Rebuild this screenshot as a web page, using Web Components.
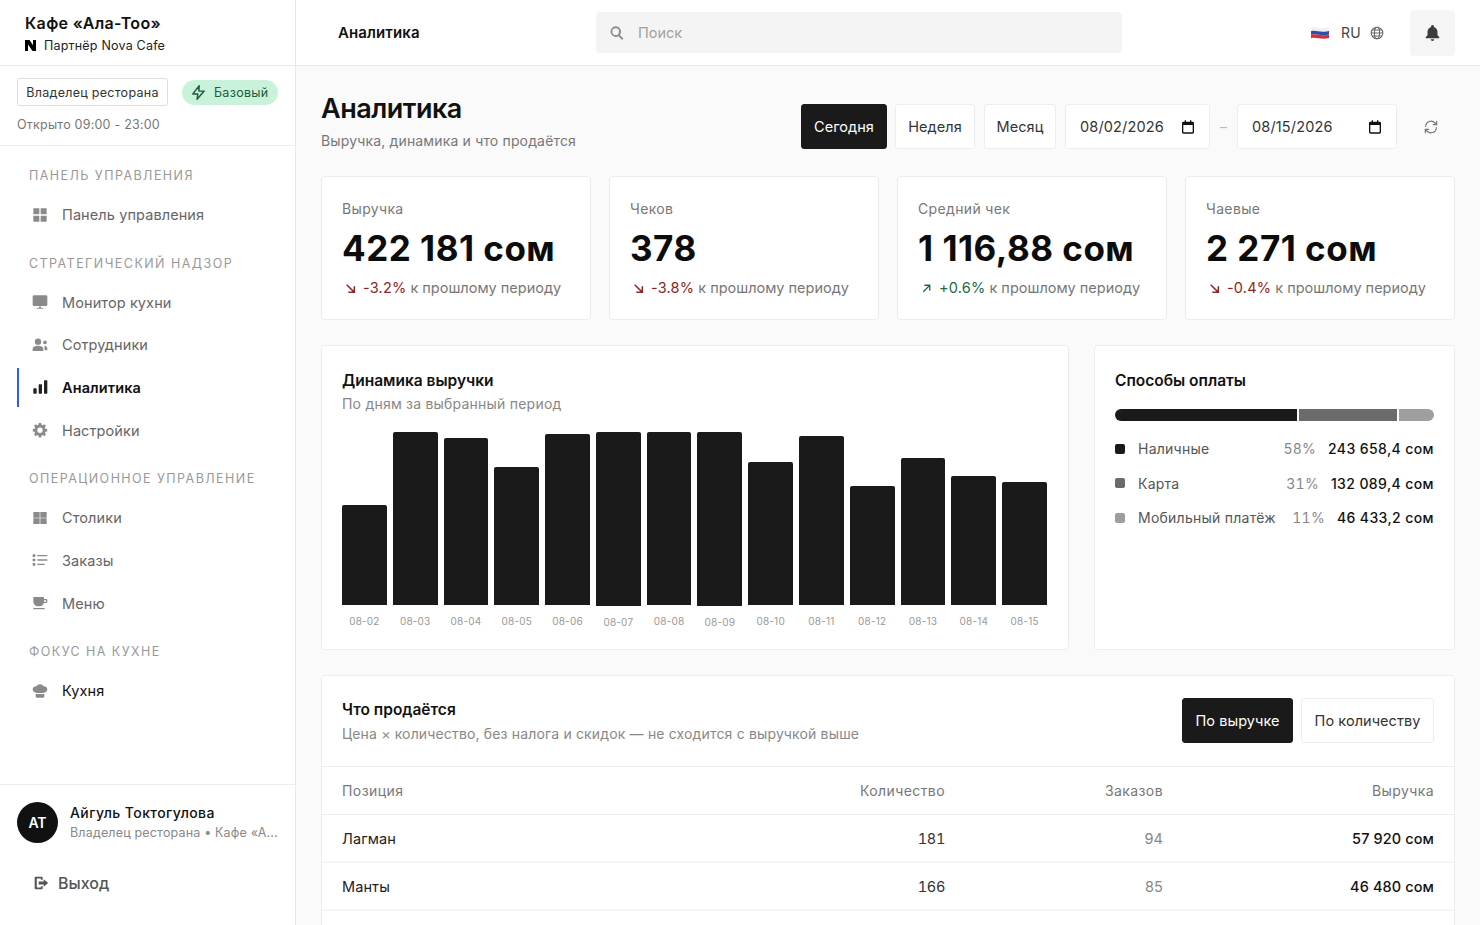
<!DOCTYPE html>
<html lang="ru">
<head>
<meta charset="utf-8">
<title>Аналитика</title>
<style>
  html, body { margin: 0; height: 100%; overflow: hidden; }
  body { font-family: Inter, "Noto Sans", sans-serif; color: #111; background: #fafafa; }
</style>
</head>
<body>
<app-shell>
  <app-sidebar slot="side"></app-sidebar>
  <app-topbar slot="top"></app-topbar>
  <page-head></page-head>
  <stat-row>
    <stat-card label="Выручка" value="422 181 сом" delta="-3.2%" dir="down"></stat-card>
    <stat-card label="Чеков" value="378" delta="-3.8%" dir="down"></stat-card>
    <stat-card label="Средний чек" value="1 116,88 сом" delta="+0.6%" dir="up"></stat-card>
    <stat-card label="Чаевые" value="2 271 сом" delta="-0.4%" dir="down"></stat-card>
  </stat-row>
  <chart-row>
    <revenue-chart></revenue-chart>
    <pay-methods></pay-methods>
  </chart-row>
  <sales-table></sales-table>
</app-shell>

<script>
// все иконки в одном месте, viewBox 24x24
const ICONS = {
  grid: '<path d="M2 2h9v9H2zM13 2h9v9h-9zM2 13h9v9H2zM13 13h9v9h-9z"/>',
  monitor: '<path d="M3 2h18a2 2 0 0 1 2 2v12a2 2 0 0 1-2 2h-8v2.500h4V22H7v-1.500h4V18H3a2 2 0 0 1-2-2V4a2 2 0 0 1 2-2z"/>',
  people: '<circle cx="9" cy="7" r="4.800"/><path d="M1 21v-3.500C1 14.500 5 13 9 13s8 1.500 8 4.500V21z"/><circle cx="19.500" cy="8" r="2.800"/><path d="M18.500 13.300c2.500.3 4.500 1.500 4.500 4V20h-4v-2.800c0-1.500-.2-2.800-.5-3.900z"/>',
  bars: '<rect x="2" y="14" width="5" height="8" rx="1"/><rect x="10" y="8" width="5" height="14" rx="1"/><rect x="18" y="2" width="5" height="20" rx="1"/>',
  gear: '<path fill-rule="evenodd" d="M10 1h4l.6 3.100 1.800.8L19 3.100 21.900 6l-1.800 2.600.8 1.800L24 11v4l-3.100.6-.8 1.800 1.800 2.600L19 22.900l-2.600-1.800-1.800.8L14 25h-4l-.6-3.100-1.800-.8L5 22.900 2.100 20l1.800-2.600-.8-1.800L0 15v-4l3.100-.6.8-1.800L2.100 6 5 3.100l2.600 1.800 1.800-.8zM12 8.500a4.500 4.500 0 1 0 0 9 4.500 4.500 0 0 0 0-9z" transform="translate(1.200 .6) scale(.9)"/>',
  table: '<path d="M2 3h9.500v8.500H2zM12.500 3H22v8.500h-9.500zM2 12.500h9.500V21H2zM12.500 12.500H22V21h-9.500z"/>',
  list: '<rect x="1" y="3.500" width="4" height="4" rx=".8"/><rect x="1" y="10" width="4" height="4" rx=".8"/><rect x="1" y="16.500" width="4" height="4" rx=".8"/><path d="M8 4.500h15v2H8zM8 11h15v2H8zM8 17.500h11v2H8z"/>',
  cup: '<path fill-rule="evenodd" d="M2 3h16v3h3a2 2 0 0 1 2 2v2a2 2 0 0 1-2 2h-3.300A7 7 0 0 1 11 17H9a7 7 0 0 1-7-7zM18 8v2h3V8z"/><rect x="2" y="19.500" width="17" height="2" rx=".5"/>',
  chef: '<path d="M12 2c2.300 0 4.200 1.100 5 2.800 3-.2 6 1.500 6 4.700 0 2.700-2 4.500-4.500 4.800V15h-13v-.7C3 14 1 12.200 1 9.500c0-3.200 3-4.900 6-4.700C7.800 3.100 9.700 2 12 2z"/><path d="M5.500 16.500h13V20a2 2 0 0 1-2 2h-9a2 2 0 0 1-2-2z"/>',
  logout: '<path d="M4 2.500h9A1.500 1.500 0 0 1 14.500 4v3h-2.700V5.200H5.700v13.600h6.100V17h2.700v3a1.500 1.500 0 0 1-1.500 1.500H4A1.500 1.500 0 0 1 2.500 20V4A1.500 1.500 0 0 1 4 2.500z"/><path d="M16 6.500 22.800 12 16 17.500V14.200H8.500v-4.400H16z"/>',
  search: '<path fill-rule="evenodd" d="M10 2a8 8 0 0 1 6.300 12.900l5.400 5.400-2.100 2.100-5.400-5.400A8 8 0 1 1 10 2zm0 3a5 5 0 1 0 0 10 5 5 0 0 0 0-10z"/>',
  bell: '<path d="M12 1.500a2 2 0 0 1 2 2v.6c3 .9 5 3.500 5 6.900v5l2.500 2.500V20h-19v-1.500L5 16v-5c0-3.400 2-6 5-6.900v-.6a2 2 0 0 1 2-2z"/><path d="M9.500 21.500h5a2.500 2.500 0 0 1-5 0z"/>',
  calendar: '<path fill-rule="evenodd" d="M7 2h2v2h6V2h2v2h2a2 2 0 0 1 2 2v14a2 2 0 0 1-2 2H5a2 2 0 0 1-2-2V6a2 2 0 0 1 2-2h2zM5 9v11h14V9z"/>',
  bolt: '<path d="M13 2.500 4 14h7l-1 7.500L20 10h-7.500z" fill="none" stroke="currentColor" stroke-width="2" stroke-linejoin="round"/>',
  globe: '<g fill="none" stroke="currentColor" stroke-width="1.800"><circle cx="12" cy="12" r="10"/><ellipse cx="12" cy="12" rx="4.500" ry="10"/><path d="M2 12h20M3.500 7h17M3.500 17h17"/></g>',
  refresh: '<g fill="none" stroke="currentColor" stroke-width="1.800" stroke-linecap="round" stroke-linejoin="round"><path d="M4 11a8 8 0 0 1 14-5l2.500 2.500"/><path d="M20.500 3.500v5h-5"/><path d="M20 13a8 8 0 0 1-14 5l-2.500-2.500"/><path d="M3.500 20.500v-5h5"/></g>',
  down: '<path d="M5 5l13 13M19 8v11H8" fill="none" stroke="currentColor" stroke-width="2.800"/>',
  up: '<path d="M6 18 18 6M8 6h10v10" fill="none" stroke="currentColor" stroke-width="2.400"/>',
};

class XIcon extends HTMLElement {
  connectedCallback() {
    const size = this.getAttribute('size') || 16;
    this.attachShadow({ mode: 'open' }).innerHTML = `
      <style>
        :host { display: inline-flex; flex: none; }
        svg { display: block; fill: currentColor; }
      </style>
      <svg width="${size}" height="${size}" viewBox="0 0 24 24">${ICONS[this.getAttribute('name')]}</svg>`;
  }
}
customElements.define('x-icon', XIcon);

class NavItem extends HTMLElement {
  connectedCallback() {
    this.attachShadow({ mode: 'open' }).innerHTML = `
      <style>
        :host {
          display: flex; align-items: center; height: 39px; margin-bottom: 3.670px;
          padding-left: 13px; border-left: 2px solid transparent;
          color: #666; font-size: 14.500px; letter-spacing: .1px; gap: 14px;
        }
        :host([active]) { border-left-color: #2f5fe0; color: #111; font-weight: 600; }
        :host([strong]) { color: #111; }
        x-icon { color: #8a8a8a; }
        :host([active]) x-icon { color: #222; }
      </style>
      <x-icon name="${this.getAttribute('icon')}" size="16"></x-icon>
      <span><slot></slot></span>`;
  }
}
customElements.define('nav-item', NavItem);

class NavGroup extends HTMLElement {
  connectedCallback() {
    this.attachShadow({ mode: 'open' }).innerHTML = `
      <style>
        :host { display: block; }
        h4 {
          margin: 0 0 11px; padding-left: 12px; font-size: 12.500px; font-weight: 400;
          line-height: 17px; letter-spacing: 1.450px; color: #999; text-transform: uppercase;
        }
      </style>
      <h4>${this.getAttribute('title')}</h4>
      <slot></slot>`;
  }
}
customElements.define('nav-group', NavGroup);

class AppSidebar extends HTMLElement {
  connectedCallback() {
    this.attachShadow({ mode: 'open' }).innerHTML = `
      <style>
        :host {
          display: flex; flex-direction: column; width: 296px; height: 925px; box-sizing: border-box;
          background: #fff; border-right: 1px solid #e8e8e8;
        }
        .brand { height: 66px; box-sizing: border-box; padding: 14px 25px 0; border-bottom: 1px solid #e8e8e8; }
        .brand b { display: block; font-size: 16px; font-weight: 600; line-height: 19px; letter-spacing: .35px; }
        .partner { display: flex; align-items: center; gap: 8px; margin-top: 4px; font-size: 12.500px; line-height: 17px; letter-spacing: .2px; color: #222; }
        .partner svg { display: block; }
        .role { height: 80px; box-sizing: border-box; padding: 12px 17px 0; border-bottom: 1px solid #eee; }
        .chips { display: flex; align-items: center; gap: 14px; }
        .chip {
          height: 28px; box-sizing: border-box; width: 151px; justify-content: center; display: flex; align-items: center; flex: none;
          border: 1px solid #ddd; border-radius: 3px; font-size: 12.500px; letter-spacing: .28px; color: #333; white-space: nowrap;
        }
        .plan {
          height: 25px; box-sizing: border-box; padding: 0 9px 0 8px; display: flex; align-items: center; gap: 7px;
          background: #c8f2da; border-radius: 13px; font-size: 12.500px; letter-spacing: .3px; color: #1d5a3a;
        }
        .hours { margin-top: 10px; font-size: 12.500px; line-height: 17px; letter-spacing: .22px; color: #777; }
        nav { flex: 1; padding: 21px 0 0 17px; display: flex; flex-direction: column; gap: 17px; }
        .user { height: 141px; box-sizing: border-box; border-top: 1px solid #ececec; padding: 17px 17px 0; }
        .who { display: flex; gap: 12px; align-items: center; }
        .ava {
          width: 41px; height: 41px; border-radius: 50%; background: #111; color: #fff; flex: none;
          display: flex; align-items: center; justify-content: center; font-size: 14px; font-weight: 600;
        }
        .who div div { white-space: nowrap; }
        .name { font-size: 14px; font-weight: 500; line-height: 20px; letter-spacing: .4px; color: #111; }
        .sub { font-size: 12.500px; line-height: 19px; letter-spacing: .17px; color: #888; }
        .out { display: flex; align-items: center; gap: 9px; margin: 30px 0 0 16px; font-size: 16px; font-weight: 500; color: #555; }
      </style>
      <div class="brand">
        <b>Кафе «Ала-Тоо»</b>
        <div class="partner">
          <svg width="11" height="11" viewBox="0 0 11 11"><path d="M0 0h3v11H0zM8 0h3v11H8z"/><path d="M1 0h3.500l6 9v2H7.500L1 1.500z"/></svg>
          <span>Партнёр Nova Cafe</span>
        </div>
      </div>
      <div class="role">
        <div class="chips">
          <span class="chip">Владелец ресторана</span>
          <span class="plan"><x-icon name="bolt" size="17"></x-icon>Базовый</span>
        </div>
        <div class="hours">Открыто 09:00 - 23:00</div>
      </div>
      <nav>
        <nav-group title="Панель управления">
          <nav-item icon="grid">Панель управления</nav-item>
        </nav-group>
        <nav-group title="Стратегический надзор">
          <nav-item icon="monitor">Монитор кухни</nav-item>
          <nav-item icon="people">Сотрудники</nav-item>
          <nav-item icon="bars" active>Аналитика</nav-item>
          <nav-item icon="gear">Настройки</nav-item>
        </nav-group>
        <nav-group title="Операционное управление">
          <nav-item icon="table">Столики</nav-item>
          <nav-item icon="list">Заказы</nav-item>
          <nav-item icon="cup">Меню</nav-item>
        </nav-group>
        <nav-group title="Фокус на кухне">
          <nav-item icon="chef" strong>Кухня</nav-item>
        </nav-group>
      </nav>
      <div class="user">
        <div class="who">
          <div class="ava">АТ</div>
          <div>
            <div class="name">Айгуль Токтогулова</div>
            <div class="sub">Владелец ресторана • Кафе «А...</div>
          </div>
        </div>
        <div class="out"><x-icon name="logout" size="16"></x-icon>Выход</div>
      </div>`;
  }
}
customElements.define('app-sidebar', AppSidebar);

class AppTopbar extends HTMLElement {
  connectedCallback() {
    this.attachShadow({ mode: 'open' }).innerHTML = `
      <style>
        :host {
          display: flex; align-items: center; height: 66px; box-sizing: border-box; padding: 0 25px 0 42px;
          background: #fff; border-bottom: 1px solid #e8e8e8;
        }
        .title { width: 258px; font-size: 15px; font-weight: 600; letter-spacing: .1px; }
        .search {
          width: 526px; height: 41px; box-sizing: border-box; padding-left: 13px; display: flex; align-items: center; gap: 13px;
          background: #f4f4f4; border-radius: 4px; font-size: 14.500px; color: #a0a0a0;
        }
        .search x-icon { color: #8d8d8d; }
        .right { flex: 1; display: flex; align-items: center; justify-content: flex-end; }
        .lang { display: flex; align-items: center; font-size: 14px; letter-spacing: .3px; color: #444; margin-right: 26px; }
        .lang svg { display: block; margin-right: 12px; }
        .lang x-icon { margin-left: 9px; color: #666; }
        .bell { width: 45px; height: 46px; display: flex; align-items: center; justify-content: center; background: #f5f5f5; border-radius: 4px; color: #3c3c3c; }
      </style>
      <div class="title">Аналитика</div>
      <div class="search"><x-icon name="search" size="16"></x-icon><span>Поиск</span></div>
      <div class="right">
        <div class="lang">
          <svg width="18" height="13" viewBox="0 0 18 13">
            <path fill="#eef0f4" d="M0 2c4-2 9 1.500 18-.5V5C10 7 4 3.500 0 5.200z"/>
            <path fill="#2c4fa8" d="M0 5.200C4 3.500 10 7 18 5v3.500C10 10.500 4 7 0 8.700z"/>
            <path fill="#d5303a" d="M0 8.700C4 7 10 10.500 18 8.500V12c-8 2-14-1.500-18 .3z"/>
          </svg>
          <span>RU</span><x-icon name="globe" size="14"></x-icon>
        </div>
        <div class="bell"><x-icon name="bell" size="17"></x-icon></div>
      </div>`;
  }
}
customElements.define('app-topbar', AppTopbar);

class SegButton extends HTMLElement {
  connectedCallback() {
    this.attachShadow({ mode: 'open' }).innerHTML = `
      <style>
        :host {
          display: inline-flex; align-items: center; justify-content: center; height: 45px; box-sizing: border-box;
          padding: 0 12px; background: #fff; border: 1px solid #eee; border-radius: 3px;
          font-size: 14.500px; letter-spacing: .05px; color: #333; white-space: nowrap;
        }
        :host([on]) { background: #1a1a1a; border-color: #1a1a1a; color: #fff; }
      </style>
      <slot></slot>`;
  }
}
customElements.define('seg-button', SegButton);

class DateBox extends HTMLElement {
  connectedCallback() {
    this.attachShadow({ mode: 'open' }).innerHTML = `
      <style>
        :host {
          display: flex; align-items: center; justify-content: space-between; height: 45px; box-sizing: border-box;
          padding: 0 13px 0 14px; background: #fff; border: 1px solid #eee; border-radius: 3px;
          font-size: 14.500px; letter-spacing: .15px; color: #333;
        }
        x-icon { color: #111; }
      </style>
      <span><slot></slot></span><x-icon name="calendar" size="16"></x-icon>`;
  }
}
customElements.define('date-box', DateBox);

class PageHead extends HTMLElement {
  connectedCallback() {
    this.attachShadow({ mode: 'open' }).innerHTML = `
      <style>
        :host { display: flex; justify-content: space-between; height: 110px; box-sizing: border-box; padding-top: 26px; }
        h1 { margin: 0; font-size: 27px; font-weight: 600; line-height: 34px; letter-spacing: -.5px; color: #111; }
        p { margin: 5px 0 0; font-size: 14px; line-height: 20px; letter-spacing: .16px; color: #777; }
        .tools { display: flex; align-items: center; height: 45px; margin-top: 12px; }
        .dash { width: 27px; text-align: center; color: #bbb; font-size: 14px; }
        .sync { margin-left: 26px; margin-right: 16px; color: #777; }
      </style>
      <div>
        <h1>Аналитика</h1>
        <p>Выручка, динамика и что продаётся</p>
      </div>
      <div class="tools">
        <seg-button on style="margin-right:8px;width:86px">Сегодня</seg-button>
        <seg-button style="margin-right:9px;width:80px">Неделя</seg-button>
        <seg-button style="margin-right:9px;width:72px">Месяц</seg-button>
        <date-box style="width:145px">08/02/2026</date-box>
        <span class="dash">–</span>
        <date-box style="width:160px">08/15/2026</date-box>
        <x-icon class="sync" name="refresh" size="16"></x-icon>
      </div>`;
  }
}
customElements.define('page-head', PageHead);

class StatRow extends HTMLElement {
  connectedCallback() {
    this.attachShadow({ mode: 'open' }).innerHTML = `
      <style>:host { display: grid; grid-template-columns: repeat(4, minmax(0, 1fr)); gap: 18px; }</style>
      <slot></slot>`;
  }
}
customElements.define('stat-row', StatRow);

class StatCard extends HTMLElement {
  connectedCallback() {
    const dir = this.getAttribute('dir');
    this.attachShadow({ mode: 'open' }).innerHTML = `
      <style>
        :host {
          display: block; height: 144px; box-sizing: border-box; padding: 23px 20px 0;
          background: #fff; border: 1px solid #ededed; border-radius: 4px;
        }
        .label { font-size: 14px; line-height: 18px; letter-spacing: .35px; color: #777; }
        .value { margin-top: 8px; font-size: 35px; font-weight: 700; line-height: 44px; letter-spacing: .5px; color: #0c0c0c; white-space: nowrap; }
        .delta { margin-top: 8px; display: flex; align-items: center; font-size: 14.500px; line-height: 20px; color: #777; white-space: nowrap; }
        x-icon { margin: 0 6px 0 2px; color: ${dir === 'up' ? '#1d6b45' : '#8f2424'}; }
        b { font-weight: 400; margin-right: 4px; letter-spacing: .2px; color: ${dir === 'up' ? '#1d6b45' : '#8f2424'}; }
      </style>
      <div class="label">${this.getAttribute('label')}</div>
      <div class="value">${this.getAttribute('value')}</div>
      <div class="delta"><x-icon name="${dir}" size="13"></x-icon><b>${this.getAttribute('delta')}</b>к прошлому периоду</div>`;
  }
}
customElements.define('stat-card', StatCard);

class ChartRow extends HTMLElement {
  connectedCallback() {
    this.attachShadow({ mode: 'open' }).innerHTML = `
      <style>:host { display: grid; grid-template-columns: 748px 1fr; gap: 25px; margin-top: 25px; }</style>
      <slot></slot>`;
  }
}
customElements.define('chart-row', ChartRow);

class RevenueChart extends HTMLElement {
  connectedCallback() {
    // дата, высота столбца, сдвиг вниз
    const days = [['08-02',100],['08-03',173],['08-04',167],['08-05',138],['08-06',171],['08-07',174,1],['08-08',173],
      ['08-09',174,1],['08-10',143],['08-11',169],['08-12',119],['08-13',147],['08-14',129],['08-15',123]];
    const cols = days.map(([d, h, low]) => `
      <div class="col" style="margin-bottom:${low ? -low : 0}px">
        <div class="bar" style="height:${h}px"></div>
        <span>${d}</span>
      </div>`).join('');
    this.attachShadow({ mode: 'open' }).innerHTML = `
      <style>
        :host {
          display: block; height: 305px; box-sizing: border-box; padding: 25px 20px 0 20px;
          background: #fff; border: 1px solid #ededed; border-radius: 4px;
        }
        h3 { margin: 0; font-size: 15.500px; font-weight: 600; line-height: 20px; color: #111; }
        p { margin: 3px 0 0; font-size: 14px; line-height: 20px; letter-spacing: .22px; color: #888; }
        .plot { display: grid; grid-template-columns: repeat(14, 1fr); gap: 6px; align-items: end; height: 193px; margin-top: 18px; margin-right: 1px; }
        .col { display: flex; flex-direction: column; align-items: stretch; }
        .bar { background: #1a1a1a; border-radius: 2px 2px 0 0; }
        span { margin-top: 10px; text-align: center; font-size: 10px; line-height: 12px; letter-spacing: .2px; color: #999; }
      </style>
      <h3>Динамика выручки</h3>
      <p>По дням за выбранный период</p>
      <div class="plot">${cols}</div>`;
  }
}
customElements.define('revenue-chart', RevenueChart);

class PayMethods extends HTMLElement {
  connectedCallback() {
    const rows = [
      ['#1a1a1a', 'Наличные', '58%', '243 658,4 сом'],
      ['#6b6b6b', 'Карта', '31%', '132 089,4 сом'],
      ['#9e9e9e', 'Мобильный платёж', '11%', '46 433,2 сом'],
    ].map(([c, n, p, v]) => `
      <div class="row">
        <i style="background:${c}"></i><span class="n">${n}</span><span class="p">${p}</span><span class="v">${v}</span>
      </div>`).join('');
    this.attachShadow({ mode: 'open' }).innerHTML = `
      <style>
        :host {
          display: block; height: 305px; box-sizing: border-box; padding: 25px 20px 0 20px;
          background: #fff; border: 1px solid #ededed; border-radius: 4px;
        }
        h3 { margin: 0; font-size: 15.500px; font-weight: 600; line-height: 20px; color: #111; }
        .stack { display: flex; gap: 2px; height: 12px; margin: 18px 0 10.500px; border-radius: 6px; overflow: hidden; }
        .stack div { height: 100%; }
        .row { display: flex; align-items: center; height: 34.500px; font-size: 14px; letter-spacing: .25px; white-space: nowrap; }
        i { width: 10px; height: 10px; border-radius: 2px; margin-right: 13px; flex: none; }
        .n { flex: 1; color: #555; }
        .p { margin-right: 12px; color: #888; font-variant-numeric: tabular-nums; }
        .v { font-weight: 500; letter-spacing: .4px; color: #111; }
      </style>
      <h3>Способы оплаты</h3>
      <div class="stack">
        <div style="width:182px;background:#1a1a1a"></div>
        <div style="width:98px;background:#6b6b6b"></div>
        <div style="flex:1;background:#9e9e9e"></div>
      </div>
      ${rows}`;
  }
}
customElements.define('pay-methods', PayMethods);

class SalesTable extends HTMLElement {
  connectedCallback() {
    this.attachShadow({ mode: 'open' }).innerHTML = `
      <style>
        :host {
          display: block; margin-top: 25px; height: 300px; box-sizing: border-box;
          background: #fff; border: 1px solid #ededed; border-radius: 4px 4px 0 0;
        }
        .head { display: flex; justify-content: space-between; height: 91px; box-sizing: border-box; padding: 22px 20px 0 20px; border-bottom: 1px solid #ececec; }
        h3 { margin: 2px 0 0; font-size: 15.500px; font-weight: 600; line-height: 20px; color: #111; }
        p { margin: 4px 0 0; font-size: 14px; line-height: 20px; letter-spacing: .16px; color: #888; }
        .btns { display: flex; gap: 8px; }
        .row {
          display: grid; grid-template-columns: 403px 200px 218px 271px; align-items: center; height: 47.750px; box-sizing: border-box;
          padding: 1px 20px 0; border-bottom: 2px solid #f6f6f6; font-size: 14.500px; letter-spacing: .1px; color: #333;
        }
        .row.th { height: 48px; padding-top: 0; border-bottom: 1px solid #ececec; color: #777; font-size: 14px; letter-spacing: .42px; }
        .row span:not(:first-child) { text-align: right; }
        .name { color: #222; }
        .qty { font-variant-numeric: tabular-nums; letter-spacing: -.3px; }
        .orders { color: #888; }
        .sum { font-weight: 500; color: #111; }
      </style>
      <div class="head">
        <div>
          <h3>Что продаётся</h3>
          <p>Цена × количество, без налога и скидок — не сходится с выручкой выше</p>
        </div>
        <div class="btns">
          <seg-button on style="width:111px">По выручке</seg-button>
          <seg-button style="width:133px">По количеству</seg-button>
        </div>
      </div>
      <div class="row th"><span>Позиция</span><span>Количество</span><span>Заказов</span><span>Выручка</span></div>
      <div class="row"><span class="name">Лагман</span><span class="qty">181</span><span class="orders">94</span><span class="sum">57 920 сом</span></div>
      <div class="row"><span class="name">Манты</span><span class="qty">166</span><span class="orders">85</span><span class="sum">46 480 сом</span></div>`;
  }
}
customElements.define('sales-table', SalesTable);

class AppShell extends HTMLElement {
  connectedCallback() {
    this.attachShadow({ mode: 'open' }).innerHTML = `
      <style>
        :host { display: grid; grid-template-columns: 296px minmax(0, 1fr); grid-template-rows: 66px 1fr; height: 925px; overflow: hidden; }
        .side { grid-row: 1 / 3; }
        main { padding: 0 25px; background: #fafafa; overflow: hidden; }
      </style>
      <div class="side"><slot name="side"></slot></div>
      <slot name="top"></slot>
      <main><slot></slot></main>`;
  }
}
customElements.define('app-shell', AppShell);
</script>
</body>
</html>
